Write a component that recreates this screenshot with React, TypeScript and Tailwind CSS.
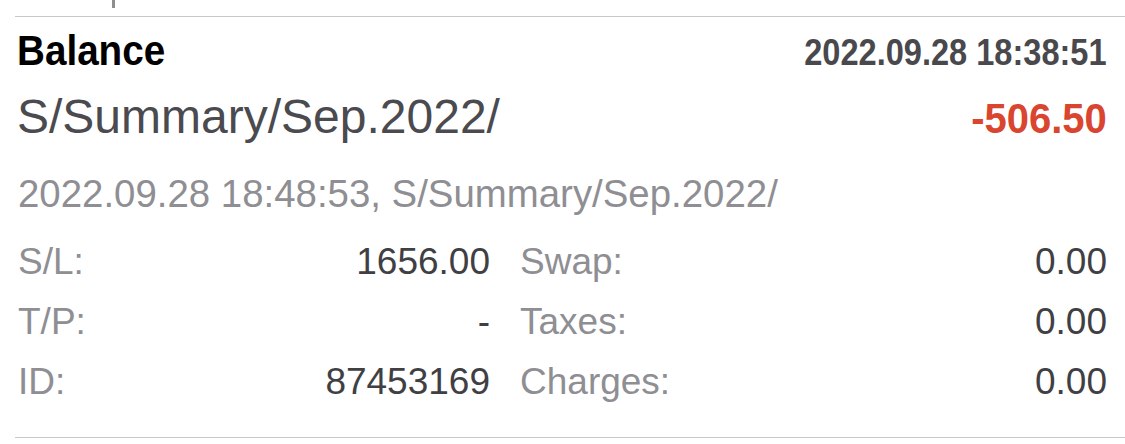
const font = { fontFamily: '"Liberation Sans", Arial, sans-serif' };

const rows = [
  { l1: "S/L:", v1: "1656.00", l2: "Swap:", v2: "0.00" },
  { l1: "T/P:", v1: "-", l2: "Taxes:", v2: "0.00" },
  { l1: "ID:", v1: "87453169", l2: "Charges:", v2: "0.00" },
];

export default function App() {
  return (
    <div className="w-[1125px] h-[444px] bg-white overflow-hidden" style={font}>
      {/* tail of the previous item */}
      <div className="h-[16px] pl-[112px]">
        <div className="w-[3px] h-[8px] bg-[#8e8e93]" />
      </div>
      <div className="ml-[15px] border-t border-b border-[#c8c8cc] pt-[10px] pr-[18px] pb-[25px]">
        <div className="flex items-baseline justify-between pl-[2px] leading-[48px]">
          <span className="inline-block origin-left scale-x-[0.92] text-[42px] font-bold text-black">Balance</span>
          <span className="inline-block origin-right scale-x-[0.88] text-[37px] font-bold text-[#48484d]">
            2022.09.28 18:38:51
          </span>
        </div>
        <div className="mt-[12px] flex items-baseline justify-between pl-[2px] leading-[56px]">
          <span className="text-[48px] text-[#4a4a4f]">S/Summary/Sep.2022/</span>
          <span className="inline-block origin-right scale-x-[0.93] text-[43px] font-bold text-[#d9452f]">-506.50</span>
        </div>
        <div className="mt-[26px] pl-[3px] text-[38.4px] leading-[44px] text-[#8e8e93]">
          2022.09.28 18:48:53, S/Summary/Sep.2022/
        </div>
        <div className="mt-[16px] grid grid-cols-[472px_1fr] gap-x-[30px] pl-[3px] text-[37px] leading-[60px]">
          {rows.map((r) => (
            <div key={r.l1} className="contents">
              <div className="flex justify-between">
                <span className="text-[#8e8e93]">{r.l1}</span>
                <span className="text-[#3f3f44]">{r.v1}</span>
              </div>
              <div className="flex justify-between">
                <span className="text-[#8e8e93]">{r.l2}</span>
                <span className="text-[#3f3f44]">{r.v2}</span>
              </div>
            </div>
          ))}
        </div>
      </div>
    </div>
  );
}
